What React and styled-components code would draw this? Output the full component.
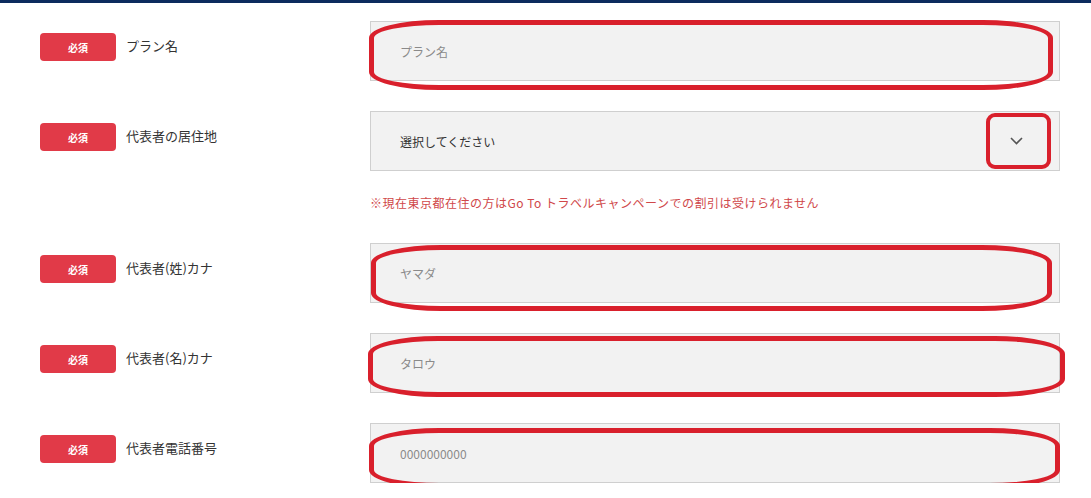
import React from "react";
import styled, { createGlobalStyle } from "styled-components";

const GlobalStyle = createGlobalStyle`
  body {
    margin: 0;
    background: #fff;
    font-family: "Noto Sans CJK JP", "Noto Sans", sans-serif;
    color: #333;
  }
`;

const TopBar = styled.div`
  height: 3px;
  background: #0c2b5e;
`;

const Form = styled.div`
  display: flex;
  flex-direction: column;
  gap: 30px;
  padding: 18px 0 0 40px;
`;

const Row = styled.div`
  display: grid;
  grid-template-columns: 330px 690px;
  align-items: start;
`;

const LabelCell = styled.div`
  display: flex;
  align-items: center;
  gap: 10px;
  padding-top: 12px;
`;

const Badge = styled.span`
  width: 76px;
  height: 28px;
  border-radius: 4px;
  background: #e13a48;
  color: #fff;
  font-size: 10px;
  font-weight: 700;
  display: flex;
  align-items: center;
  justify-content: center;
`;

const Label = styled.span`
  font-size: 13px;
  color: #333;
  line-height: 20px;
  margin-top: -2px;
`;

const FieldBox = styled.div`
  position: relative;
  height: 60px;
`;

const TextInput = styled.input`
  width: 100%;
  height: 100%;
  box-sizing: border-box;
  background: #f2f2f2;
  border: 1px solid #cfcfcf;
  padding: 0 0 0 29px;
  font-family: inherit;
  font-size: 12px;
  color: #333;
  outline: none;

  &::placeholder {
    color: #8a8a8a;
  }
`;

const SelectBox = styled.div`
  height: 100%;
  box-sizing: border-box;
  background: #f2f2f2;
  border: 1px solid #cfcfcf;
  padding: 0 36px 0 29px;
  display: flex;
  align-items: center;
  justify-content: space-between;
  font-size: 12px;
  color: #333;
`;

const Note = styled.p`
  margin: 22px 0 0;
  font-size: 12px;
  line-height: 20px;
  letter-spacing: 0.5px;
  color: #d0484a;
`;

const Mark = styled.span`
  position: absolute;
  top: ${(p) => p.$t}px;
  right: ${(p) => p.$r}px;
  bottom: ${(p) => p.$b}px;
  left: ${(p) => p.$l}px;
  border: 5px solid #d9202c;
  border-radius: 70px / 18px;
  pointer-events: none;
`;

const ChevronMark = styled.span`
  position: absolute;
  top: 2px;
  bottom: 2px;
  right: 9px;
  width: 65px;
  box-sizing: border-box;
  border: 4px solid #d9202c;
  border-radius: 9px;
  pointer-events: none;
`;

const Chevron = () => (
  <svg width="13" height="8" viewBox="0 0 13 8">
    <path d="M1 1l5.5 5.5L12 1" fill="none" stroke="#555" strokeWidth="1.6" />
  </svg>
);

const fields = [
  { label: "プラン名", placeholder: "プラン名", mark: [-1, 7, -9, -1] },
  { label: "代表者(姓)カナ", placeholder: "ヤマダ", mark: [2, 8, -8, 1] },
  { label: "代表者(名)カナ", placeholder: "タロウ", mark: [3, -5, -4, -2] },
  { label: "代表者電話番号", placeholder: "0000000000", mark: [5, 0, -5, -1] },
];

const FieldRow = ({ label, placeholder, mark }) => (
  <Row>
    <LabelCell>
      <Badge>必須</Badge>
      <Label>{label}</Label>
    </LabelCell>
    <FieldBox>
      <TextInput placeholder={placeholder} />
      <Mark $t={mark[0]} $r={mark[1]} $b={mark[2]} $l={mark[3]} />
    </FieldBox>
  </Row>
);

export default function App() {
  const [first, ...rest] = fields;
  return (
    <>
      <GlobalStyle />
      <TopBar />
      <Form>
        <FieldRow {...first} />
        <Row>
          <LabelCell>
            <Badge>必須</Badge>
            <Label>代表者の居住地</Label>
          </LabelCell>
          <div>
            <FieldBox>
              <SelectBox>
                <span>選択してください</span>
                <Chevron />
              </SelectBox>
              <ChevronMark />
            </FieldBox>
            <Note>
              ※現在東京都在住の方はGo To トラベルキャンペーンでの割引は受けられません
            </Note>
          </div>
        </Row>
        {rest.map((f) => (
          <FieldRow key={f.label} {...f} />
        ))}
      </Form>
    </>
  );
}
